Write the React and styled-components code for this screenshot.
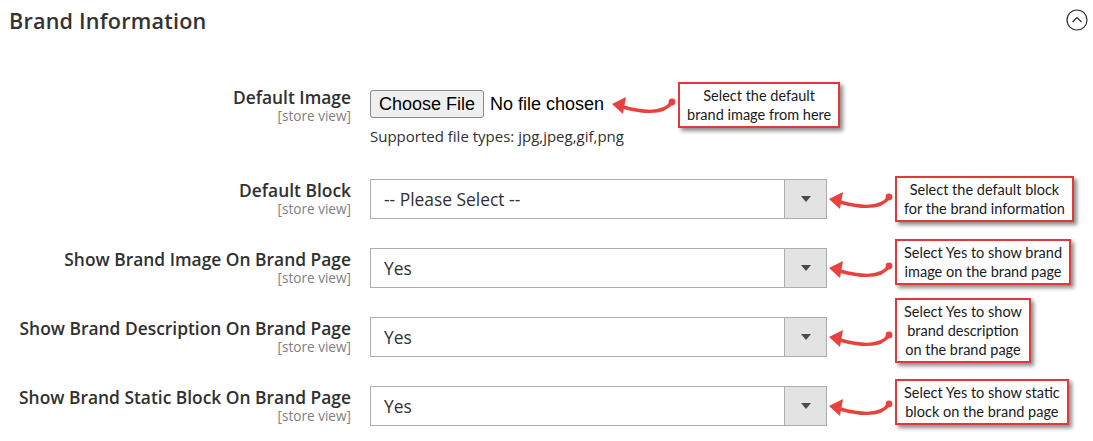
import React from 'react';
import styled, { createGlobalStyle } from 'styled-components';

const GlobalStyle = createGlobalStyle`
  body {
    margin: 0;
    background: #fff;
    font-family: 'Open Sans', 'Liberation Sans', sans-serif;
    color: #303030;
  }
`;

const rows = [
  {
    label: 'Default Block',
    value: '-- Please Select --',
    note: ['Select the default block', 'for the brand information'],
    lift: 0,
  },
  {
    label: 'Show Brand Image On Brand Page',
    value: 'Yes',
    note: ['Select Yes to show brand', 'image on the brand page'],
    lift: -6,
  },
  {
    label: 'Show Brand Description On Brand Page',
    value: 'Yes',
    note: ['Select Yes to show', 'brand description', 'on the brand page'],
    lift: -7,
  },
  {
    label: 'Show Brand Static Block On Brand Page',
    value: 'Yes',
    note: ['Select Yes to show static', 'block on the brand page'],
    lift: -4,
  },
];

const CurvedArrow = () => (
  <ArrowSvg viewBox="0 0 64 24" width="64" height="24">
    <path
      d="M60 8 C53 19, 36 20, 11 13"
      fill="none"
      stroke="#e8423f"
      strokeWidth="3.4"
      strokeLinecap="round"
    />
    <polygon points="0,10 14,3 11,20" fill="#e8423f" />
    <circle cx="60" cy="8" r="3.4" fill="#e8423f" />
  </ArrowSvg>
);

const Annotation = ({ lines, lift = 0, first }) => (
  <AnnotationWrap $first={first}>
    <CurvedArrow />
    <Callout $lift={lift}>
      {lines.map((l) => (
        <div key={l}>{l}</div>
      ))}
    </Callout>
  </AnnotationWrap>
);

const App = () => {
  return (
    <Page>
      <GlobalStyle />
      <Header>
        <Title>Brand Information</Title>
        <svg width="22" height="22" viewBox="0 0 22 22">
          <circle cx="11" cy="11" r="10" fill="none" stroke="#303030" strokeWidth="1.2" />
          <path d="M6.5 13 L11 8.6 L15.5 13" fill="none" stroke="#303030" strokeWidth="1.3" />
        </svg>
      </Header>

      <Form>
        <Row $first>
          <LabelCol>
            <Label>Default Image</Label>
            <Scope>[store view]</Scope>
          </LabelCol>
          <Control>
            <FileLine>
              <FileButton type="button">Choose File</FileButton>
              <FileName>No file chosen</FileName>
              <Annotation lines={['Select the default', 'brand image from here']} lift={1} first />
            </FileLine>
            <Note>Supported file types: jpg,jpeg,gif,png</Note>
          </Control>
        </Row>

        {rows.map((r) => (
          <Row key={r.label}>
            <LabelCol>
              <Label>{r.label}</Label>
              <Scope>[store view]</Scope>
            </LabelCol>
            <Control>
              <SelectLine>
                <SelectBox>
                  <SelectValue>{r.value}</SelectValue>
                  <ArrowCell>
                    <Caret />
                  </ArrowCell>
                </SelectBox>
                <Annotation lines={r.note} lift={r.lift} />
              </SelectLine>
            </Control>
          </Row>
        ))}
      </Form>
    </Page>
  );
};

const Page = styled.div`
  width: 1093px;
  height: 441px;
  overflow: hidden;
`;

const Header = styled.div`
  display: flex;
  justify-content: space-between;
  align-items: center;
  height: 40px;
  padding: 0 5px 0 9px;
`;

const Title = styled.h2`
  margin: 0;
  font-size: 21.6px;
  font-weight: 600;
  color: #333;
  letter-spacing: 0.2px;
`;

const Form = styled.div`
  padding-top: 46px;
`;

const Row = styled.div`
  display: grid;
  grid-template-columns: 351px 1fr;
  column-gap: 19px;
  align-items: start;
  margin-bottom: ${(p) => (p.$first ? '33px' : '29px')};
`;

const LabelCol = styled.div`
  text-align: right;
`;

const Label = styled.div`
  font-size: 17.4px;
  font-weight: 600;
  line-height: 22px;
  color: #303030;
`;

const Scope = styled.div`
  font-size: 13.6px;
  line-height: 16px;
  color: #808080;
`;

const Control = styled.div`
  display: flex;
  flex-direction: column;
`;

const FileLine = styled.div`
  display: flex;
  align-items: center;
  height: 28px;
  margin-top: 4px;
`;

const FileButton = styled.button`
  height: 28px;
  width: 114px;
  padding: 0;
  font-family: 'Liberation Sans', Arial, sans-serif;
  font-size: 18px;
  color: #000;
  background: #efefef;
  border: 1px solid #8a8a8a;
  border-radius: 3px;
`;

const FileName = styled.span`
  margin-left: 6px;
  font-family: 'Liberation Sans', Arial, sans-serif;
  font-size: 18px;
  color: #000;
`;

const Note = styled.div`
  margin-top: 8px;
  font-size: 15px;
  line-height: 20px;
  color: #303030;
`;

const SelectLine = styled.div`
  display: flex;
  align-items: center;
  height: 40px;
`;

const SelectBox = styled.div`
  display: flex;
  width: 457px;
  height: 40px;
  box-sizing: border-box;
  border: 1px solid #adadad;
  background: #fff;
`;

const SelectValue = styled.div`
  flex: 1;
  display: flex;
  align-items: center;
  padding-left: 13px;
  font-size: 17.4px;
  color: #303030;
`;

const ArrowCell = styled.div`
  width: 41px;
  display: flex;
  align-items: center;
  justify-content: center;
  background: #e3e3e3;
  border-left: 1px solid #adadad;
`;

const Caret = styled.span`
  width: 0;
  height: 0;
  border-left: 5px solid transparent;
  border-right: 5px solid transparent;
  border-top: 6px solid #514943;
`;

const AnnotationWrap = styled.div`
  display: flex;
  align-items: center;
  margin-left: ${(p) => (p.$first ? '8px' : '2px')};
`;

const ArrowSvg = styled.svg`
  display: block;
  flex-shrink: 0;
  margin-top: 4px;
`;

const Callout = styled.div`
  margin-left: 2px;
  padding: 2px 7px;
  border: 2px solid #e0393c;
  background: #fff;
  box-shadow: 3px 3px 4px rgba(0, 0, 0, 0.45);
  font-family: Lato, 'Open Sans', sans-serif;
  font-size: 14.5px;
  line-height: 19px;
  color: #1a1a1a;
  text-align: center;
  white-space: nowrap;
  transform: translateY(${(p) => p.$lift}px);
`;

export default App;
